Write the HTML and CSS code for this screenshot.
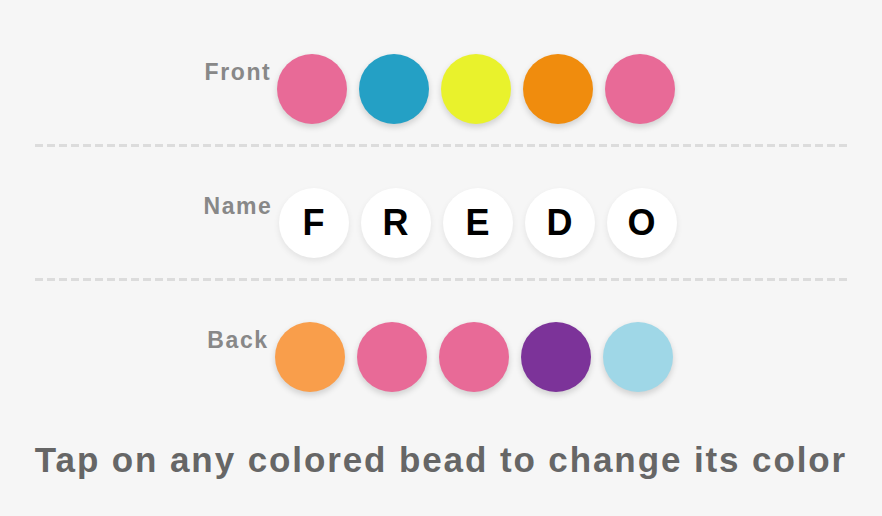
FILE: index.html
```html
<!DOCTYPE html>
<html>
<head>
<meta charset="utf-8">
<meta name="viewport" content="width=device-width, initial-scale=1">
<title>Bead Bracelet</title>
<link rel="stylesheet" href="styles.css">
</head>
<body>
<main class="designer">

 <div class="row">
   <span class="label">Front</span>
   <div class="beads">
     <span class="bead pink"></span>
     <span class="bead blue"></span>
     <span class="bead yellow"></span>
     <span class="bead orange"></span>
     <span class="bead pink"></span>
   </div>
 </div>

 <hr class="divider">

 <div class="row">
   <span class="label">Name</span>
   <div class="beads">
     <span class="bead letter">F</span>
     <span class="bead letter">R</span>
     <span class="bead letter">E</span>
     <span class="bead letter">D</span>
     <span class="bead letter">O</span>
   </div>
 </div>

 <hr class="divider">

 <div class="row">
   <span class="label">Back</span>
   <div class="beads">
     <span class="bead peach"></span>
     <span class="bead pink"></span>
     <span class="bead pink"></span>
     <span class="bead purple"></span>
     <span class="bead sky"></span>
   </div>
 </div>

 <p class="hint">Tap on any colored bead to change its color</p>

</main>
</body>
</html>
```

FILE: styles.css
```css
* {box-sizing: border-box}

body {
 margin: 0;
 background-color: #f6f6f6;
 font-family: "Liberation Sans", Arial, sans-serif;
}

.designer {
 padding-top: 54px;
}

.row {
 display: flex;
 justify-content: center;
 align-items: flex-start;
 gap: 6px;
 padding-right: 2px;
}

.label {
 margin-top: 5px;
 font-size: 23px;
 font-weight: bold;
 letter-spacing: 1.6px;
 color: #888;
}

.beads {
 display: flex;
 gap: 12px;
}

.bead {
 width: 70px;
 height: 70px;
 border-radius: 50%;
 box-shadow: 0 3px 6px rgba(0, 0, 0, 0.16);
}

.pink { background-color: #e86a97; }
.blue { background-color: #24a0c5; }
.yellow { background-color: #e9f22c; }
.orange { background-color: #f08c0d; }
.peach { background-color: #f99e4b; }
.purple { background-color: #7c3399; }
.sky { background-color: #9fd7e7; }

.letter {
 display: flex;
 align-items: center;
 justify-content: center;
 background-color: #fff;
 color: #000;
 font-size: 36px;
 font-weight: bold;
 box-shadow: 0 3px 6px rgba(0, 0, 0, 0.08);
}

.divider {
 height: 3px;
 margin: 20px 32px 41px 35px;
 border: none;
 background: repeating-linear-gradient(to right, #dcdcdc 0 8px, transparent 8px 12px);
}

.hint {
 margin: 48px 0 0;
 text-align: center;
 font-size: 35px;
 font-weight: bold;
 letter-spacing: 1.9px;
 color: #666;
}
```
